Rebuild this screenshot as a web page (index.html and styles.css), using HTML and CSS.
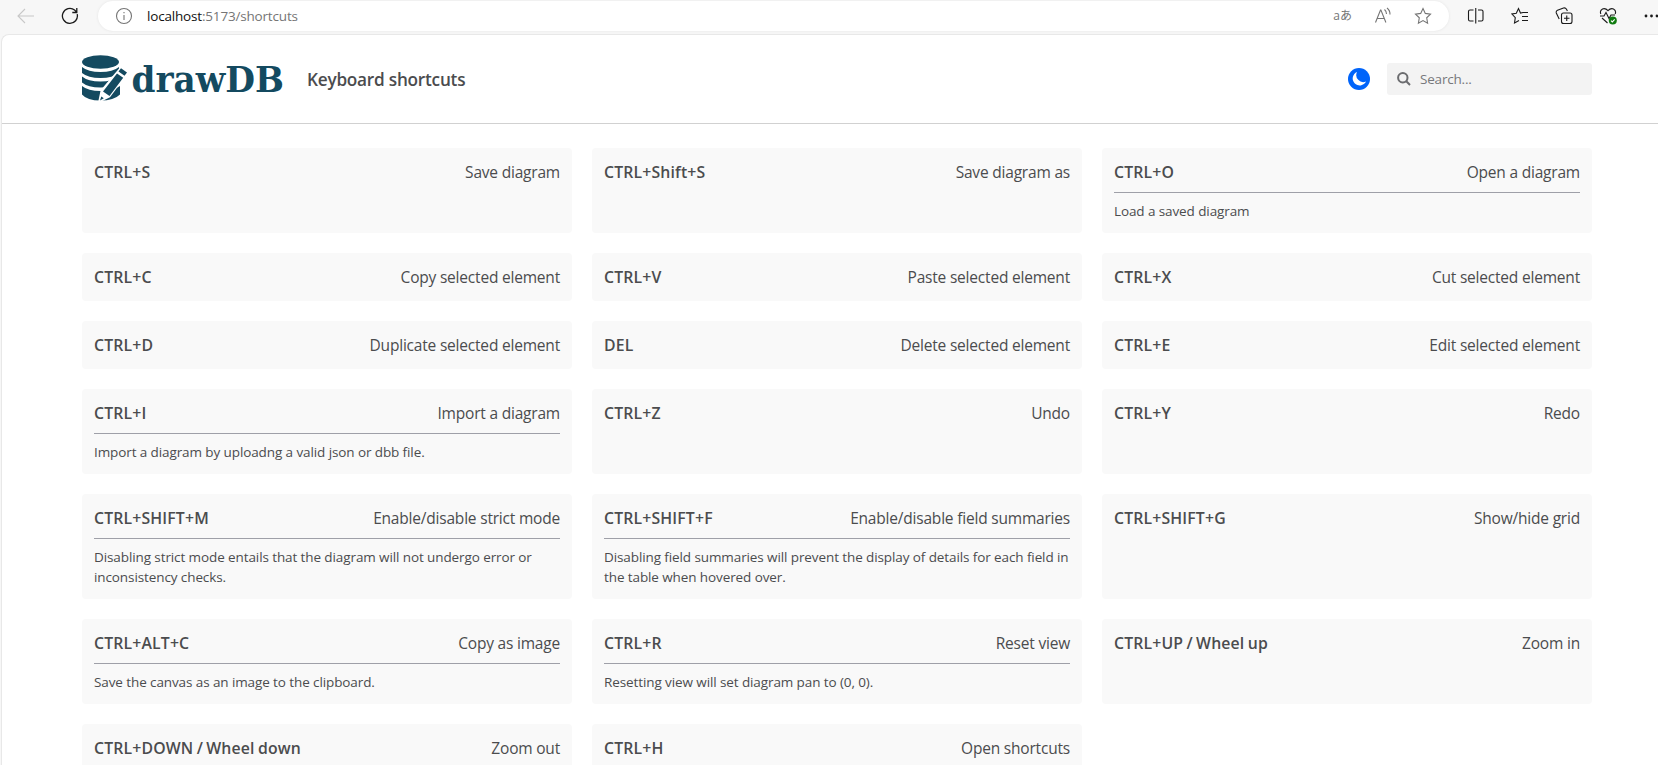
FILE: index.html
```html
<!DOCTYPE html>
<html lang="en">
<head>
    <meta charset="utf-8" />
    <title>Shortcuts | drawDB</title>
    <link rel="stylesheet" href="styles.css">
</head>
<body>
    <div class="toolbar">
        <svg class="back" width="18" height="18" viewBox="0 0 18 18"><path d="M17 9H1.500M8 2L1 9l7 7"/></svg>
        <svg class="reload" width="18" height="18" viewBox="0 0 18 18"><path d="M16.200 7.200A7.500 7.500 0 1 1 13.600 3.100L15.500 5M15.800 1v4.500h-4.500"/></svg>
        <div class="address">
            <svg width="18" height="18" viewBox="0 0 18 18"><circle cx="9" cy="9" r="7.500"/><path d="M9 8v5M9 5v1.300"/></svg>
            <span class="url"><b>localhost</b>:5173/shortcuts</span>
            <div class="address-icons">
                <span class="translate">aあ</span>
                <svg width="18" height="18" viewBox="0 0 18 18"><path d="M1.500 15.500L6.500 3h.4l5 12.500M3.200 11.500h7M10.500 2.500q2 1.800 2 4.500M13 1q3.200 2.500 3 6.500"/></svg>
                <svg width="18" height="18" viewBox="0 0 18 18"><path d="M9 1.500l2.300 4.900 5.200.7-3.800 3.700.9 5.400L9 13.600l-4.600 2.600.9-5.400L1.500 7.100l5.200-.7z"/></svg>
            </div>
        </div>
        <div class="tools">
            <svg width="18" height="18" viewBox="0 0 18 18"><path d="M6.500 3H3Q1.500 3 1.500 4.500v8Q1.500 14 3 14h3.500M11 3h3.500Q16 3 16 4.500v8q0 1.500-1.500 1.500H11M8.750 1v15.500"/></svg>
            <svg width="18" height="18" viewBox="0 0 18 18"><path d="M17 5.500h-5L9.500 6 7.500 1.500 5.300 6.300 1 7l3.300 3.600-.8 5.300L8 13.500M11 9.500h6M11 13.500h6"/></svg>
            <svg width="18" height="18" viewBox="0 0 18 18"><rect x="6.500" y="6" width="10.500" height="10.500" rx="2"/><path d="M4.200 12L1.300 6Q.8 4 2.500 3.200L8.500 1q2-.5 3 1.300l.9 1.700M11.750 8.500v5.500M9 11.250h5.500"/></svg>
            <svg width="18" height="18" viewBox="0 0 18 18"><path d="M1.800 7Q.5 3.500 3.500 1.900 6.500.8 9 3.700q2.500-2.900 5.500-1.800 3 1.600 1.700 5.100M1 9h4l2-3.500 3 6L12 8h4M3 11l5.500 5"/><circle class="ok" cx="13.800" cy="13.500" r="4"/><path class="tick" d="M12 13.700l1.300 1.200 2.400-2.600"/></svg>
            <svg class="more" width="18" height="18" viewBox="0 0 18 18"><circle cx="3" cy="9" r="1.400"/><circle cx="8.500" cy="9" r="1.400"/><circle cx="14" cy="9" r="1.400"/></svg>
        </div>
    </div>

    <div class="page">
        <header>
            <svg class="logo" width="204" height="48" viewBox="0 0 204 48">
                <ellipse cx="18.500" cy="7" rx="18.500" ry="6.700"/>
                <path d="M0 12Q6 17 18.500 17T37 12V18Q31 23 18.500 23T0 18z"/>
                <path d="M0 21.500Q6 26.500 18.500 26.500T37 21.500V27.500Q31 32.500 18.500 32.500T0 27.500z"/>
                <path d="M0 31Q6 36 18.500 36T38 31V39.500Q32 45.500 18.500 45.500T0 39.500z"/>
                <!-- pencil: white gap first, then cap, body and tip -->
                <path class="gap" d="M39 13.500L44.700 17.300 27 41 18 45.500 20 36z"/>
                <path d="M39 13.300L45 17.500 42.500 20.800 36.500 16.500zM35 18.500L41.200 22.800 27.500 41 21 36.500zM19.300 41.500l2.500 1.800-3.800 2.200z"/>
                <text x="49.500" y="36.700" textLength="152.500" lengthAdjust="spacingAndGlyphs">drawDB</text>
            </svg>
            <h1>Keyboard shortcuts</h1>
            <svg class="theme" width="22" height="22" viewBox="0 0 22 22"><circle cx="11" cy="11" r="11"/><path d="M9 4A7 7 0 1 0 18 13.500A7 7 0 0 1 9 4z"/></svg>
            <div class="search">
                <svg width="14" height="14" viewBox="0 0 14 14"><circle cx="5.800" cy="5.800" r="4.700"/><path d="M9.300 9.300L13 13"/></svg>
                <span>Search...</span>
            </div>
        </header>

        <div class="cards">
            <div class="card"><div class="row"><b>CTRL+S</b><span>Save diagram</span></div></div>
            <div class="card"><div class="row"><b>CTRL+Shift+S</b><span>Save diagram as</span></div></div>
            <div class="card"><div class="row"><b>CTRL+O</b><span>Open a diagram</span></div><p>Load a saved diagram</p></div>

            <div class="card"><div class="row"><b>CTRL+C</b><span>Copy selected element</span></div></div>
            <div class="card"><div class="row"><b>CTRL+V</b><span>Paste selected element</span></div></div>
            <div class="card"><div class="row"><b>CTRL+X</b><span>Cut selected element</span></div></div>

            <div class="card"><div class="row"><b>CTRL+D</b><span>Duplicate selected element</span></div></div>
            <div class="card"><div class="row"><b>DEL</b><span>Delete selected element</span></div></div>
            <div class="card"><div class="row"><b>CTRL+E</b><span>Edit selected element</span></div></div>

            <div class="card"><div class="row"><b>CTRL+I</b><span>Import a diagram</span></div><p>Import a diagram by uploadng a valid json or dbb file.</p></div>
            <div class="card"><div class="row"><b>CTRL+Z</b><span>Undo</span></div></div>
            <div class="card"><div class="row"><b>CTRL+Y</b><span>Redo</span></div></div>

            <div class="card"><div class="row"><b>CTRL+SHIFT+M</b><span>Enable/disable strict mode</span></div><p>Disabling strict mode entails that the diagram will not undergo error or inconsistency checks.</p></div>
            <div class="card"><div class="row"><b>CTRL+SHIFT+F</b><span>Enable/disable field summaries</span></div><p>Disabling field summaries will prevent the display of details for each field in the table when hovered over.</p></div>
            <div class="card"><div class="row"><b>CTRL+SHIFT+G</b><span>Show/hide grid</span></div></div>

            <div class="card"><div class="row"><b>CTRL+ALT+C</b><span>Copy as image</span></div><p>Save the canvas as an image to the clipboard.</p></div>
            <div class="card"><div class="row"><b>CTRL+R</b><span>Reset view</span></div><p>Resetting view will set diagram pan to (0, 0).</p></div>
            <div class="card"><div class="row"><b>CTRL+UP / Wheel up</b><span>Zoom in</span></div></div>

            <div class="card"><div class="row"><b>CTRL+DOWN / Wheel down</b><span>Zoom out</span></div></div>
            <div class="card"><div class="row"><b>CTRL+H</b><span>Open shortcuts</span></div></div>
        </div>
    </div>
</body>
</html>
```
FILE: styles.css
```css
* {
    box-sizing: border-box;
}

body {
    margin: 0;
    height: 765px;
    overflow: hidden;
    display: flex;
    flex-direction: column;
    background-color: #f7f7f7;
    font-family: "Open Sans", "Noto Sans", sans-serif;
    color: #4b4c4e;
}

svg {
    flex: none;
    fill: none;
    stroke-width: 1.1;
}

.toolbar {
    flex: none;
    height: 34px;
    padding: 1px 0 3px 17px;
    display: flex;
    align-items: center;
}

.back {
    stroke: #c8c8c8;
}

.reload {
    margin-left: 26px;
    stroke: #1b1b1b;
    stroke-width: 1.3;
}

.address {
    flex: none;
    width: 1351px;
    height: 30px;
    margin-left: 19px;
    padding: 0 17px 0 17px;
    display: flex;
    align-items: center;
    border-radius: 15px;
    background-color: #fff;
    box-shadow: 0 0 3px #e4e4e4;
    stroke: #757575;
}

.url {
    margin-left: 14px;
    font-size: 13.5px;
    letter-spacing: -0.18px;
    color: #757575;
}

.url b {
    font-weight: normal;
    color: #111;
}

.address-icons {
    margin-left: auto;
    display: flex;
    align-items: center;
    gap: 22px;
}

.translate {
    font-family: "Open Sans", "Noto Sans CJK JP", sans-serif;
    font-size: 12px;
    line-height: 18px;
    color: #757575;
}

.tools {
    margin-left: 18px;
    display: flex;
    gap: 26px;
    stroke: #1b1b1b;
}

.ok {
    fill: #0f7b0f;
    stroke: none;
}

.tick {
    stroke: #fff;
}

.more {
    fill: #1b1b1b;
    stroke: none;
}

.page {
    flex: 1;
    margin-left: 1px;
    min-height: 0;
    border: 1px solid #e8e8e8;
    border-width: 1px 0 0 1px;
    border-top-left-radius: 8px;
    background-color: #fff;
}

header {
    height: 89px;
    padding: 0 66px 0 80px;
    display: flex;
    align-items: center;
    border-bottom: 1px solid #d1d1d1;
}

.logo {
    overflow: visible;
    fill: #144a60;
}

.logo text {
    font-family: "DejaVu Serif", serif;
    font-size: 35px;
    font-weight: bold;
}

.gap {
    fill: #fff;
    stroke: #fff;
    stroke-width: 3;
}

h1 {
    margin: 1px auto 0 21px;
    font-size: 17.2px;
    font-weight: 600;
    letter-spacing: -0.23px;
}

.theme circle {
    fill: #0064fa;
}

.theme path {
    fill: #fff;
}

.search {
    width: 205px;
    height: 32px;
    margin-left: 17px;
    padding: 0 10px;
    display: flex;
    align-items: center;
    gap: 9px;
    border-radius: 3px;
    background-color: #f3f3f3;
    color: #77787b;
    font-size: 13.5px;
    letter-spacing: -0.2px;
}

.search svg {
    stroke: #6b6c6f;
    stroke-width: 2;
}

.cards {
    padding: 24px 66px 0 80px;
    display: grid;
    grid-template-columns: repeat(3, 490px);
    gap: 20px;
}

.card {
    padding: 12px;
    border-radius: 4px;
    background-color: #f9f9f9;
}

.row {
    display: flex;
    justify-content: space-between;
    font-size: 15.5px;
    line-height: 24px;
    letter-spacing: -0.2px;
}

.row b {
    font-size: 15.8px;
    font-weight: 600;
    letter-spacing: 0.16px;
    word-spacing: -1px;
}

.card p {
    margin: 8px 0 0;
    padding-top: 8px;
    border-top: 1px solid #9fa0a8;
    font-size: 13.5px;
    line-height: 20px;
    letter-spacing: -0.1px;
}
```
